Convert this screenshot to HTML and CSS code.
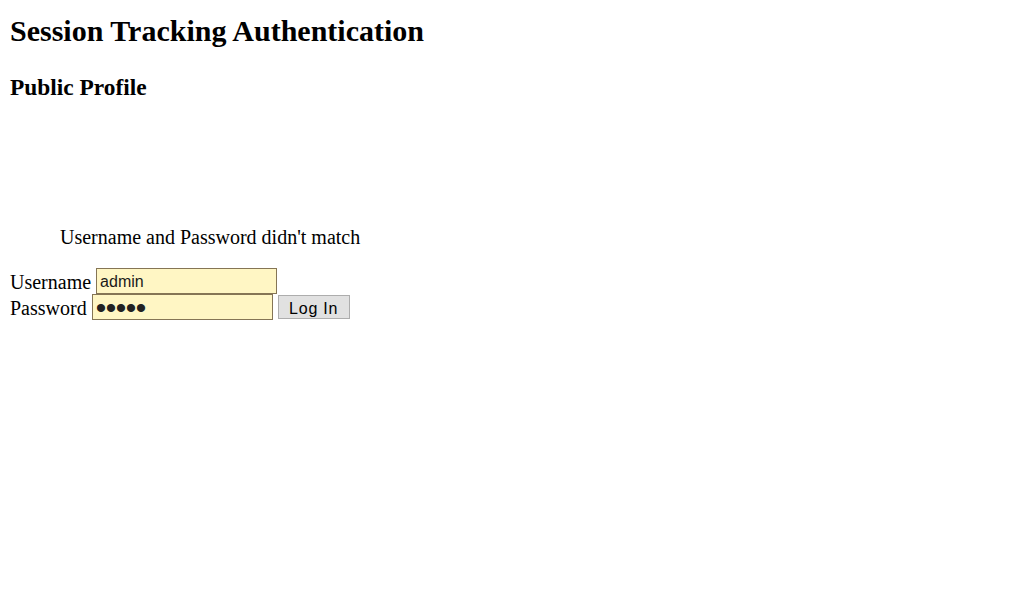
FILE: index.html
```html
<!DOCTYPE html>
<html lang="en">
<head>
<meta charset="utf-8">
<title>Session Tracking Authentication</title>
<link rel="stylesheet" href="styles.css">
</head>
<body>
<h1 class="title">Session Tracking Authentication</h1>
<h3 class="subtitle">Public Profile</h3>
<blockquote class="message">Username and Password didn't match</blockquote>
<form class="login" action="#" onsubmit="return false;">
  <div class="row">
    <label class="label" for="user">Username</label>
    <input class="field field-user" id="user" type="text" value="admin">
  </div>
  <div class="row">
    <label class="label" for="pass">Password</label>
    <input class="field field-pass" id="pass" type="password" value="admin">
    <input class="btn" type="submit" value="Log In">
  </div>
</form>
</body>
</html>
```

FILE: styles.css
```css
html, body {
  background: #ffffff;
}
body {
  margin: 0;
  padding: 0 10px;
  font-family: "Liberation Serif", "Times New Roman", serif;
  font-size: 20px;
  color: #000000;
}
.title {
  margin: 0;
  padding-top: 14px;
  font-size: 30px;
  line-height: 34px;
  font-weight: bold;
}
.subtitle {
  margin: 26px 0 0;
  font-size: 23.4px;
  line-height: 26px;
  font-weight: bold;
}
.message {
  margin: 126px 0 19px 50px;
  line-height: 23px;
}
.login {
  margin: 0;
}
.row {
  display: flex;
  align-items: center;
  height: 26px;
  line-height: 23px;
}
.label {
  white-space: nowrap;
  padding-top: 2px;
}
.field {
  box-sizing: border-box;
  width: 181px;
  height: 26px;
  margin: 0 0 0 5px;
  padding: 2px 3px 0;
  border: 1px solid #857555;
  background: #fff6c4;
  color: #1a1a1a;
  font-family: "Liberation Sans", Arial, sans-serif;
  font-size: 16px;
  outline: none;
}
.field-pass {
  padding: 1px 2px 0 3px;
  font-size: 30px;
  letter-spacing: -0.5px;
  color: #222222;
}
.btn {
  box-sizing: border-box;
  width: 72px;
  height: 24px;
  margin: 0 0 0 5px;
  padding: 3px 0 0;
  border: 1px solid #adadad;
  background: #e1e1e1;
  color: #000000;
  font-family: "Liberation Sans", Arial, sans-serif;
  font-size: 16px;
  letter-spacing: 0.8px;
  border-radius: 0;
}
```
